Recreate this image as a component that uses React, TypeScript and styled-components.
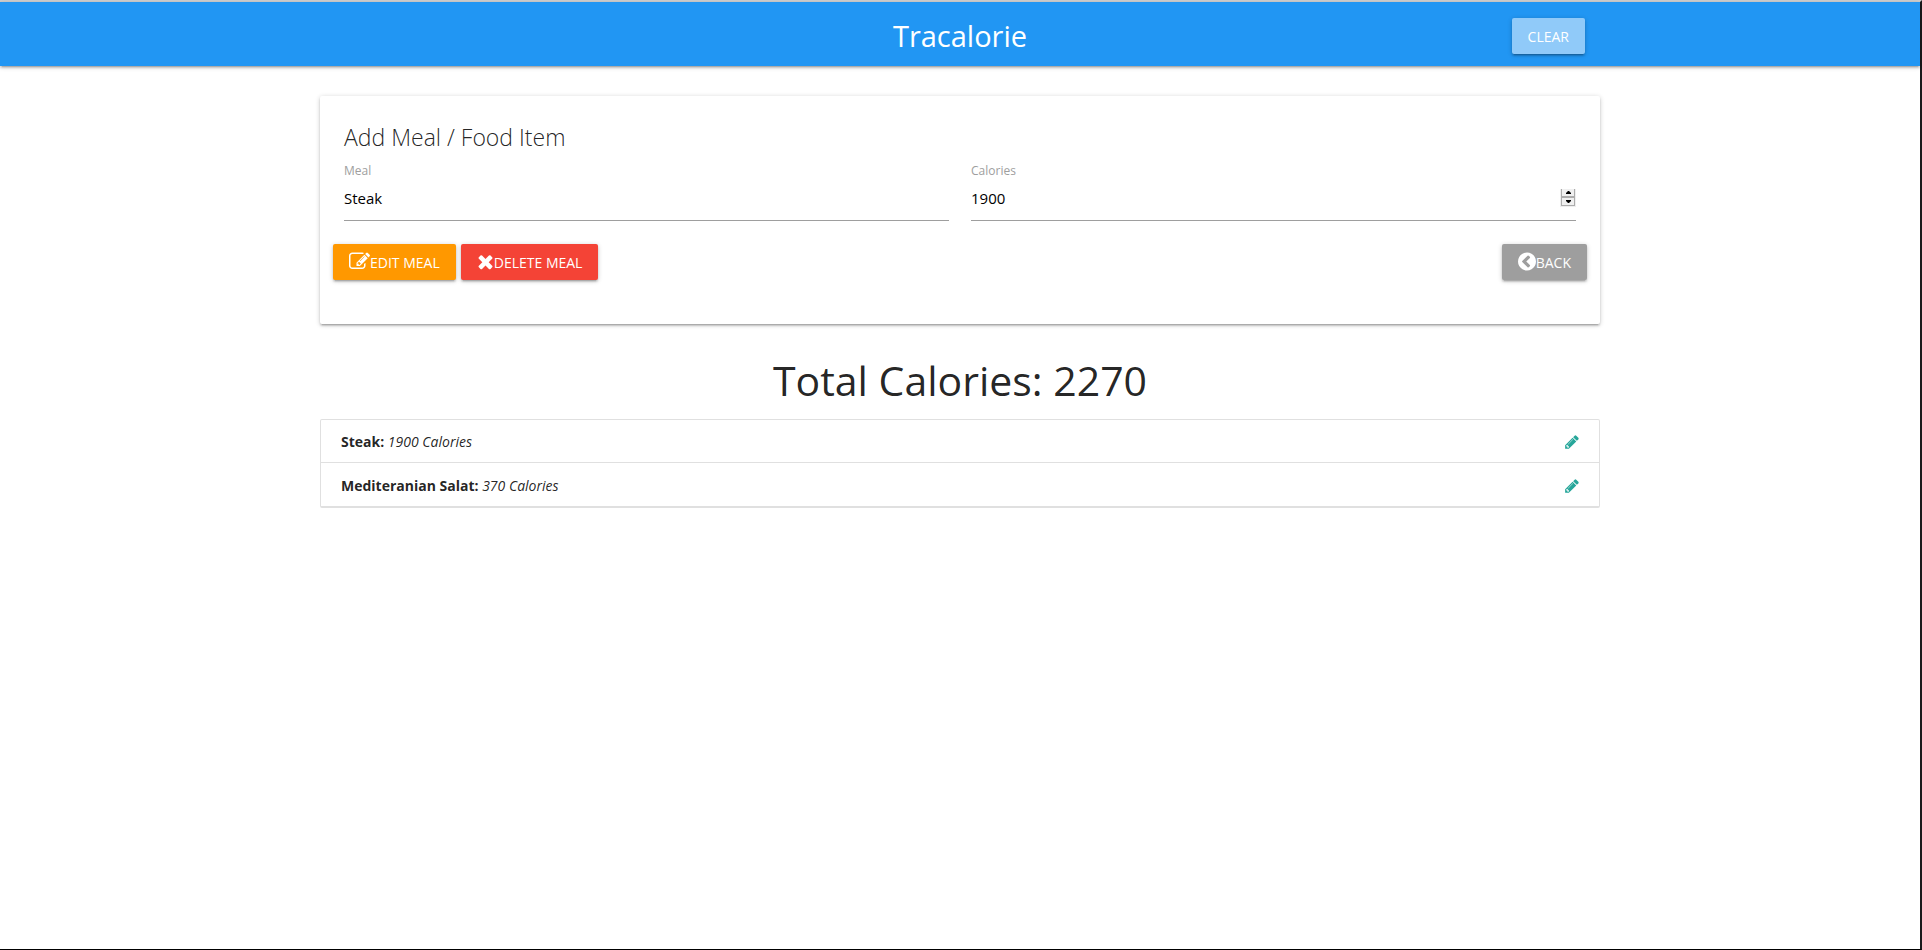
import React, { useState } from "react";
import styled, { createGlobalStyle } from "styled-components";

const GlobalStyle = createGlobalStyle`
  *, *::before, *::after { box-sizing: border-box; }
  body {
    margin: 0;
    background: #fff;
    color: rgba(0, 0, 0, 0.87);
    font-family: "Open Sans", "Noto Sans", sans-serif;
    font-size: 14px;
    line-height: 22px;
  }
`;

const raised =
  "0 2px 2px 0 rgba(0,0,0,.14), 0 3px 1px -2px rgba(0,0,0,.12), 0 1px 5px 0 rgba(0,0,0,.2)";

const Page = styled.div`
  min-height: 100vh;
  border-top: 2px solid #d0d0d0;
  border-right: 2px solid #1a1a1c;
  border-bottom: 1px solid #000;
`;

const Container = styled.div`
  width: 70%;
  max-width: 1280px;
  margin: 0 auto;
`;

const NavBar = styled.nav`
  background: #2196f3;
  color: #fff;
  box-shadow: ${raised};
`;

const NavInner = styled(Container)`
  display: grid;
  grid-template-columns: 1fr auto 1fr;
  align-items: center;
  height: 64px;
  padding: 4px 15px 0 0;
`;

const Brand = styled.a`
  grid-column: 2;
  margin-left: 15px;
  color: #fff;
  font-size: 29px;
  line-height: 60px;
  text-decoration: none;
`;

const Button = styled.button<{ $color: string }>`
  display: inline-flex;
  align-items: center;
  height: 36px;
  padding: 2px 16px 0;
  border: 0;
  border-radius: 2px;
  background: ${(p) => p.$color};
  color: #fff;
  box-shadow: ${raised};
  font-family: inherit;
  font-size: 14px;
  line-height: 34px;
  text-transform: uppercase;
  white-space: nowrap;
  cursor: pointer;
`;

const ClearButton = styled(Button)`
  justify-self: end;
`;

const Card = styled.section`
  margin-top: 30px;
  padding: 25px 13px 44px;
  border-radius: 2px;
  background: #fff;
  box-shadow: ${raised};
`;

const CardTitle = styled.h2`
  margin: 0 11px 10px;
  font-size: 23px;
  font-weight: 300;
  line-height: 32px;
`;

const Fields = styled.div`
  display: grid;
  grid-template-columns: 1fr 1fr;
  gap: 22px;
  margin: 0 11px 23px;
`;

const Label = styled.label`
  display: block;
  color: #9e9e9e;
  font-size: 12px;
  line-height: 16px;
`;

const InputRow = styled.div`
  display: flex;
  align-items: center;
  height: 42px;
  padding-bottom: 4px;
  border-bottom: 1px solid #9e9e9e;
`;

const Input = styled.input`
  flex: 1;
  min-width: 0;
  height: 100%;
  padding: 0;
  border: 0;
  outline: 0;
  background: transparent;
  color: #000;
  font-family: inherit;
  font-size: 15px;
  appearance: textfield;
  &::-webkit-inner-spin-button { appearance: none; margin: 0; }
`;

const Stepper = styled.div`
  display: flex;
  flex-direction: column;
  width: 16px;
  height: 18px;
  padding: 0 1px 1px;
  background: #eee;
`;

const StepButton = styled.button`
  display: flex;
  flex: 1;
  align-items: center;
  justify-content: center;
  padding: 0;
  border: 1px solid #acacac;
  border-top-width: 0;
  background: #f0f0f0;
  & + & { border-top-width: 1px; }
`;

const Actions = styled.div`
  display: flex;
  gap: 5px;
`;

const BackButton = styled(Button)`
  margin-left: auto;
`;

const Total = styled.h3`
  margin: 31px 0 13px;
  font-size: 41px;
  font-weight: 400;
  line-height: 51px;
  text-align: center;
`;

const Collection = styled.ul`
  margin: 0;
  padding: 0;
  border: 1px solid #e0e0e0;
  border-bottom-width: 2px;
  border-radius: 2px;
  list-style: none;
`;

const Item = styled.li`
  display: flex;
  align-items: center;
  justify-content: space-between;
  height: 42px;
  padding: 2px 20px 0;
  & + & { height: 44px; border-top: 1px solid #e0e0e0; }
`;

const EditLink = styled.a`
  display: flex;
  color: #26a69a;
`;

const glyphs = {
  edit: {
    x: 0, w: 1792,
    d: "M888 1184l116-116-152-152-116 116v56h96v96h56zm440-720q-16-16-33 1l-350 350q-17 17-1 33t33-1l350-350q17-17 1-33zm80 594v190q0 119-84.5 203.5t-203.5 84.5h-832q-119 0-203.5-84.5t-84.5-203.5v-832q0-119 84.5-203.5t203.5-84.5h832q63 0 117 25 15 7 18 23 3 17-9 29l-49 49q-14 14-32 8-23-6-45-6h-832q-66 0-113 47t-47 113v832q0 66 47 113t113 47h832q66 0 113-47t47-113v-126q0-13 9-22l64-64q15-15 35-7t20 29zm-96-738l288 288-672 672h-288v-288zm444 132l-92 92-288-288 92-92q28-28 68-28t68 28l152 152q28 28 28 68t-28 68z",
  },
  remove: {
    x: 192, w: 1408,
    d: "M1490 1322q0 40-28 68l-136 136q-28 28-68 28t-68-28l-294-294-294 294q-28 28-68 28t-68-28l-136-136q-28-28-28-68t28-68l294-294-294-294q-28-28-28-68t28-68l136-136q28-28 68-28t68 28l294 294 294-294q28-28 68-28t68 28l136 136q28 28 28 68t-28 68l-294 294 294 294q28 28 28 68z",
  },
  back: {
    x: 128, w: 1536,
    d: "M1037 1395l102-102q19-19 19-45t-19-45l-307-307 307-307q19-19 19-45t-19-45l-102-102q-19-19-45-19t-45 19l-454 454q-19 19-19 45t19 45l454 454q19 19 45 19t45-19zm627-499q0 209-103 385.5t-279.5 279.5-385.5 103-385.5-103-279.5-279.5-103-385.5 103-385.5 279.5-279.5 385.5-103 385.5 103 279.5 279.5 103 385.5z",
  },
  pencil: {
    x: 128, w: 1536,
    d: "M491 1536l91-91-235-235-91 91v107h128v128h107zm523-928q0-22-22-22-10 0-17 7l-542 542q-7 7-7 17 0 22 22 22 10 0 17-7l542-542q7-7 7-17zm-54-192l416 416-832 832h-416v-416zm683 96q0 53-37 90l-166 166-416-416 166-165q36-38 90-38 53 0 91 38l235 234q37 39 37 91z",
  },
};

function Glyph({ name, size = 21 }: { name: keyof typeof glyphs; size?: number }) {
  const g = glyphs[name];
  return (
    <svg
      width={Math.round((g.w / 1792) * size)}
      height={size}
      viewBox={`${g.x} 0 ${g.w} 1792`}
      fill="currentColor"
      aria-hidden="true"
    >
      <path d={g.d} />
    </svg>
  );
}

const ButtonIcon = styled.span`
  display: flex;
  padding-bottom: 4px;
`;

const meals = [
  { name: "Steak", calories: 1900 },
  { name: "Mediteranian Salat", calories: 370 },
];

export default function App() {
  const [meal, setMeal] = useState("Steak");
  const [calories, setCalories] = useState(1900);
  const total = meals.reduce((sum, m) => sum + m.calories, 0);

  return (
    <Page>
      <GlobalStyle />
      <NavBar>
        <NavInner>
          <Brand href="#">Tracalorie</Brand>
          <ClearButton type="button" $color="#90caf9">Clear</ClearButton>
        </NavInner>
      </NavBar>
      <Container as="main">
        <Card>
          <CardTitle>Add Meal / Food Item</CardTitle>
          <Fields>
            <div>
              <Label htmlFor="meal">Meal</Label>
              <InputRow>
                <Input id="meal" type="text" value={meal} onChange={(e) => setMeal(e.target.value)} />
              </InputRow>
            </div>
            <div>
              <Label htmlFor="calories">Calories</Label>
              <InputRow>
                <Input
                  id="calories"
                  type="number"
                  value={calories}
                  onChange={(e) => setCalories(Number(e.target.value))}
                />
                <Stepper>
                  <StepButton type="button" aria-label="Increase calories" onClick={() => setCalories(calories + 1)}>
                    <svg width="5" height="3" viewBox="0 0 5 3"><path d="M0 3V2L2 0h1l2 2v1z" /></svg>
                  </StepButton>
                  <StepButton type="button" aria-label="Decrease calories" onClick={() => setCalories(calories - 1)}>
                    <svg width="5" height="3" viewBox="0 0 5 3"><path d="M0 0v1l2 2h1l2-2V0z" /></svg>
                  </StepButton>
                </Stepper>
              </InputRow>
            </div>
          </Fields>
          <Actions>
            <Button type="button" $color="#ff9800"><ButtonIcon><Glyph name="edit" /></ButtonIcon>Edit Meal</Button>
            <Button type="button" $color="#f44336"><ButtonIcon><Glyph name="remove" /></ButtonIcon>Delete Meal</Button>
            <BackButton type="button" $color="#9e9e9e"><ButtonIcon><Glyph name="back" /></ButtonIcon>Back</BackButton>
          </Actions>
        </Card>
        <Total>Total Calories: {total}</Total>
        <Collection>
          {meals.map((m) => (
            <Item key={m.name}>
              <span><strong>{m.name}:</strong> <em>{m.calories} Calories</em></span>
              <EditLink href="#" aria-label={`Edit ${m.name}`}><Glyph name="pencil" size={16} /></EditLink>
            </Item>
          ))}
        </Collection>
      </Container>
    </Page>
  );
}
